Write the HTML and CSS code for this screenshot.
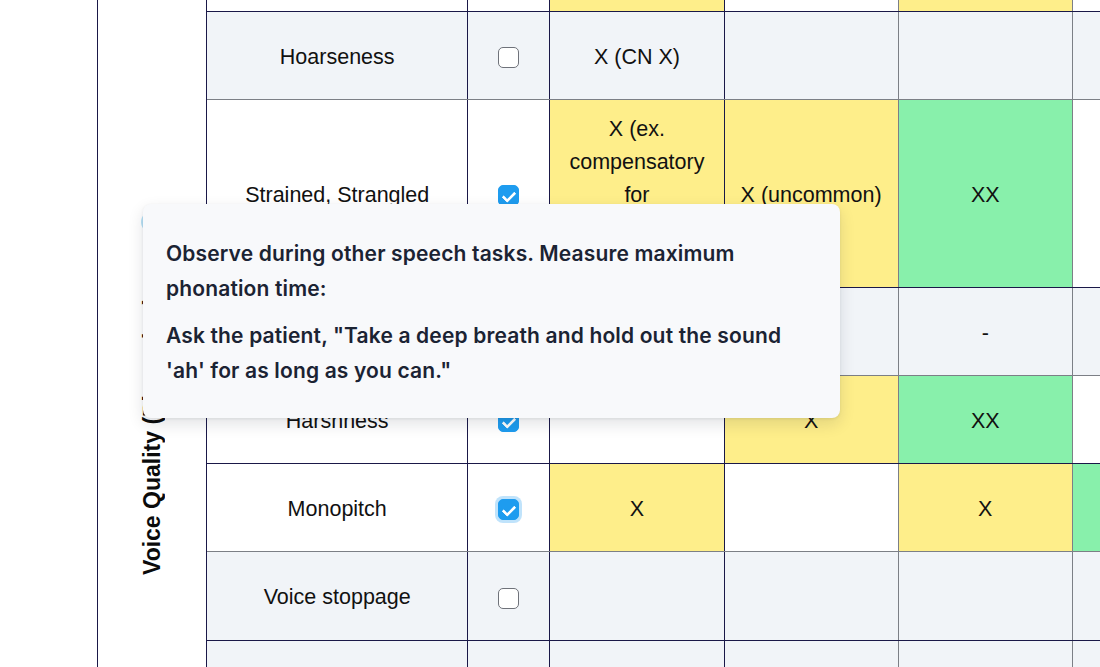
FILE: index.html
```html
<!DOCTYPE html>
<html lang="en">
<head>
<meta charset="utf-8">
<title>Voice Quality assessment</title>
<link rel="stylesheet" href="styles.css">
</head>
<body>
<div class="viewport">
  <table class="grid">
    <colgroup>
      <col class="c-cat"><col class="c-sym"><col class="c-chk"><col class="c-d"><col class="c-d"><col class="c-d"><col class="c-d">
    </colgroup>
    <tbody>
      <tr class="h88">
        <td class="cat" rowspan="8">
          <div class="cat-inner">
            <span class="info-dot"></span>
            <span class="cat-label">Voice Quality (Phonation)</span>
          </div>
        </td>
        <td>Pitch breaks</td>
        <td><input class="box" type="checkbox"></td>
        <td class="yellow">X</td><td class="d2"></td><td class="d3 yellow">X</td><td></td>
      </tr>
      <tr class="h88 alt gb">
        <td>Hoarseness</td>
        <td><input class="box" type="checkbox"></td>
        <td>X (CN X)</td><td class="d2"></td><td class="d3"></td><td></td>
      </tr>
      <tr class="h188">
        <td>Strained, Strangled</td>
        <td><input class="box" type="checkbox" checked></td>
        <td class="yellow">X (ex. compensatory for hypernasality or flaccidity)</td>
        <td class="d2 yellow">X (uncommon)</td>
        <td class="d3 green">XX</td>
        <td></td>
      </tr>
      <tr class="h88 alt gb">
        <td>Breathiness</td>
        <td><input class="box" type="checkbox"></td>
        <td></td><td class="d2"></td><td class="d3">-</td><td></td>
      </tr>
      <tr class="h88">
        <td>Harshness</td>
        <td><input class="box" type="checkbox" checked></td>
        <td></td><td class="d2 yellow">X</td><td class="d3 green">XX</td><td></td>
      </tr>
      <tr class="h88 gb">
        <td>Monopitch</td>
        <td><input class="box focus" type="checkbox" checked></td>
        <td class="yellow">X</td><td class="d2"></td><td class="d3 yellow">X</td><td class="green"></td>
      </tr>
      <tr class="h89 alt">
        <td>Voice stoppage</td>
        <td><input class="box" type="checkbox"></td>
        <td></td><td class="d2"></td><td class="d3"></td><td></td>
      </tr>
      <tr class="h88 alt">
        <td>Wet, gurgly</td>
        <td><input class="box" type="checkbox"></td>
        <td></td><td class="d2"></td><td class="d3"></td><td></td>
      </tr>
    </tbody>
  </table>

  <div class="tip" role="tooltip">
    <p>Observe during other speech tasks. Measure maximum phonation time:</p>
    <p>Ask the patient, "Take a deep breath and hold out the sound 'ah' for as long as you can."</p>
  </div>
</div>
</body>
</html>
```

FILE: styles.css
```css
* { box-sizing: border-box; }

html, body {
  margin: 0;
  padding: 0;
  background: #ffffff;
}

body {
  width: 1100px;
  height: 667px;
  overflow: hidden;
  font-family: "Liberation Sans", Arial, sans-serif;
  color: #111111;
}

.viewport {
  position: relative;
  height: 667px;
  overflow: hidden;
  padding-left: 97px;
}

.grid {
  border-collapse: collapse;
  table-layout: fixed;
  width: 1150px;
  margin-top: -77px;
  font-size: 21.5px;
  line-height: 33px;
}

.c-cat { width: 109px; }
.c-sym { width: 261px; }
.c-chk { width: 82px; }
.c-d { width: 174px; }

.grid td {
  border: 1px solid #1a1848;
  text-align: center;
  vertical-align: middle;
  padding: 3px 14px 0;
  background: #ffffff;
}

.h88 { height: 88px; }
.h89 { height: 89px; }
.h188 { height: 188px; }

.alt td:not(.cat) { background: #f1f4f8; }
.gb td { border-bottom-color: #7c7f86; }

.grid td.d2,
.grid td.d3 { border-right-color: #7c7f86; }

.grid td.yellow { background: #feee8a; }
.grid td.green { background: #88f0ab; }

/* category column */
.grid td.cat {
  vertical-align: top;
  padding: 287px 0 0;
  background: #ffffff;
}

.cat-inner {
  display: flex;
  flex-direction: column;
  align-items: center;
  gap: 6px;
}

.info-dot {
  width: 22px;
  height: 22px;
  border-radius: 50%;
  background: #b9e2f6;
}

.cat-label {
  writing-mode: vertical-rl;
  transform: rotate(180deg);
  height: 394px;
  font-size: 23px;
  font-weight: 700;
  line-height: 1;
  white-space: nowrap;
  color: #0b0b0b;
}

/* checkboxes */
.box {
  -webkit-appearance: none;
  appearance: none;
  position: relative;
  display: inline-block;
  width: 21px;
  height: 21px;
  margin: 0;
  vertical-align: middle;
  border: 1.5px solid #6f727a;
  border-radius: 5px;
  background: #ffffff;
}

.box:checked {
  background: #1e9cef;
  border-color: #1e9cef;
}

.box:checked::after {
  content: "";
  position: absolute;
  left: 6px;
  top: 2.5px;
  width: 5px;
  height: 10px;
  border: solid #ffffff;
  border-width: 0 3px 3px 0;
  border-radius: 1px;
  transform: rotate(45deg);
}

.box.focus {
  box-shadow: 0 0 0 3px rgba(30, 156, 239, 0.28);
}

/* tooltip overlay */
.tip {
  position: absolute;
  left: 143px;
  top: 204px;
  width: 697px;
  padding: 32px 40px 30px 23px;
  background: #f8f9fb;
  border-radius: 8px;
  box-shadow: 0 6px 16px rgba(15, 23, 42, 0.12), 0 1px 3px rgba(15, 23, 42, 0.08);
  font-family: Inter, "Noto Sans", sans-serif;
  font-weight: 600;
  font-size: 21px;
  letter-spacing: 0.15px;
  line-height: 35px;
  color: #1b2333;
}

.tip p { margin: 0; }
.tip p + p { margin-top: 12px; }
```
